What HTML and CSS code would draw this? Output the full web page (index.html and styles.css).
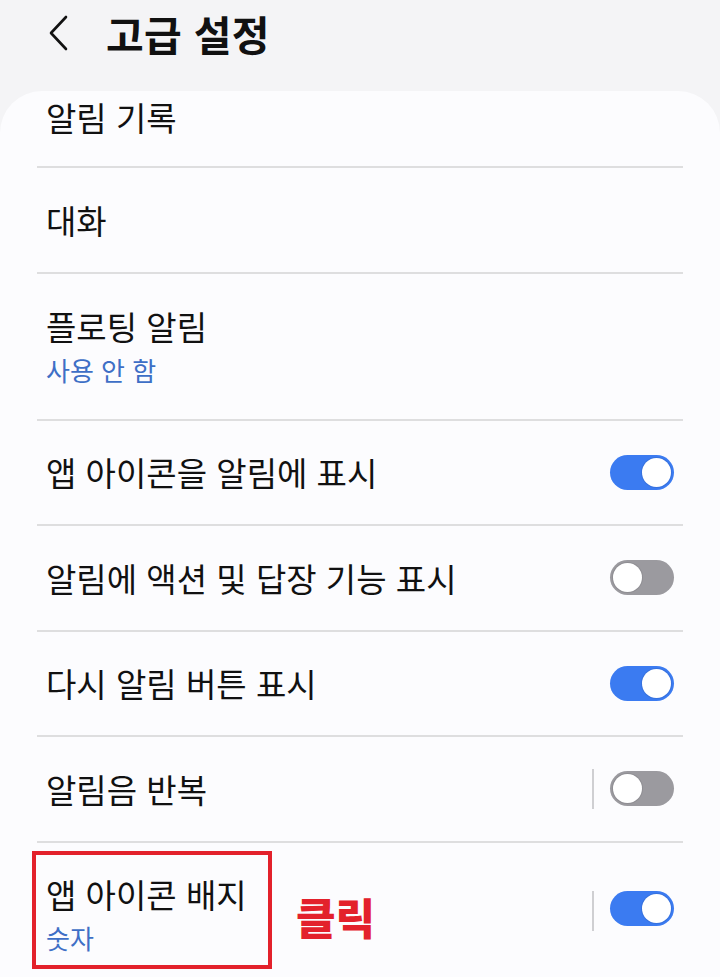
FILE: index.html
```html
<!DOCTYPE html>
<html lang="ko">
<head>
<meta charset="utf-8">
<title>고급 설정</title>
<meta name="viewport" content="width=device-width,initial-scale=1">
<link rel="stylesheet" href="styles.css">
</head>
<body>

<header class="topbar">
  <button class="back" aria-label="뒤로">
    <svg viewBox="0 0 24 40" width="24" height="40"><polyline points="19,4 4,20 19,36"/></svg>
  </button>
  <h1>고급 설정</h1>
</header>

<main class="card">
  <div class="row first"><div class="label">알림 기록</div></div>
  <div class="row"><div class="label">대화</div></div>
  <div class="row two">
    <div class="label">플로팅 알림<div class="sub">사용 안 함</div></div>
  </div>
  <div class="row">
    <div class="label">앱 아이콘을 알림에 표시</div>
    <span class="switch on"></span>
  </div>
  <div class="row">
    <div class="label">알림에 액션 및 답장 기능 표시</div>
    <span class="switch"></span>
  </div>
  <div class="row">
    <div class="label">다시 알림 버튼 표시</div>
    <span class="switch on"></span>
  </div>
  <div class="row">
    <div class="label">알림음 반복</div>
    <span class="sep"></span>
    <span class="switch"></span>
  </div>
  <div class="row two last">
    <div class="label">앱 아이콘 배지<div class="sub">숫자</div></div>
    <span class="hint">클릭</span>
    <span class="sep"></span>
    <span class="switch on"></span>
    <div class="mark"></div>
  </div>
</main>

</body>
</html>
```

FILE: styles.css
```css
:root{--fg:#111;--blue:#3b7bf1;--gray:#9b9a9f;--line:#dededf;--bg:#f4f4f6;--card:#fcfcfe}
*{box-sizing:border-box;font-family:"Noto Sans CJK KR","Noto Sans",sans-serif}
html,body{height:100%}
body{margin:0;background:var(--bg);color:var(--fg);overflow:hidden}

.topbar{height:91px;display:flex;align-items:flex-start;padding:9px 0 0 47px}
.back{border:none;background:transparent;padding:0;margin:4px 35px 0 0;width:24px;height:40px}
.back svg polyline{fill:none;stroke:#111;stroke-width:2.6;stroke-linecap:round;stroke-linejoin:round}
.topbar h1{margin:0;font-size:41px;font-weight:700;line-height:48px;letter-spacing:.3px}

.card{background:var(--card);border-radius:42px 42px 0 0;padding:0 37px;min-height:900px}
.row{position:relative;display:flex;align-items:center;height:105.5px;padding:0 9px 0 9px;
     border-bottom:2px solid var(--line)}
.row.first{height:77px;align-items:flex-start;padding-top:5px}
.row.two{height:147px}
.row.last{height:150px;border-bottom:none;align-items:flex-start;padding-top:30px}
.label{flex:1;font-size:33px;line-height:42px}
.sub{font-size:26px;line-height:34px;color:#3e6fc6;margin-top:6px}

.switch{position:relative;width:64px;height:35px;border-radius:18px;background:var(--gray);flex:none}
.switch::after{content:"";position:absolute;top:3px;left:3px;width:29px;height:29px;border-radius:50%;
     background:#fff;box-shadow:0 0 0 1px rgba(0,0,0,.08)}
.switch.on{background:var(--blue)}
.switch.on::after{left:32px}
.sep{width:2px;height:40px;background:#cfcfd2;margin-right:16px;flex:none}
.last .sep,.last .switch{margin-top:18px}

.hint{font-size:43px;font-weight:900;color:#e3212b;line-height:50px;
      position:absolute;left:259px;top:48px}
.mark{position:absolute;left:-5px;top:8px;width:240px;height:118px;border:4px solid #e3212b}
```
